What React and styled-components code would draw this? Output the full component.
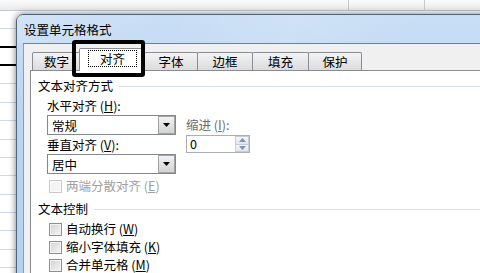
import styled, { createGlobalStyle } from "styled-components";

const GlobalStyle = createGlobalStyle`
  html, body {
    margin: 0;
    padding: 0;
  }
  body {
    font-family: "Noto Sans CJK SC", "Liberation Sans", sans-serif;
    font-size: 12px;
    color: #000;
  }
`;

const Screen = styled.div`
  position: relative;
  width: 480px;
  height: 273px;
  overflow: hidden;
  background: #fff;
`;

// spreadsheet behind the dialog
const Sheet = styled.div`
  display: flex;
  flex-direction: column;
`;

const ColumnHeader = styled.div`
  height: 11px;
  box-sizing: border-box;
  display: flex;
  border-bottom: 1px solid #c3cad4;
  background: linear-gradient(#fbfbfb, #ebebeb);
`;

const HeaderCell = styled.div`
  width: ${(p) => p.$w}px;
  flex-shrink: 0;
  border-right: 1px solid #c9c9c9;
`;

const SheetRow = styled.div`
  height: 18.36px;
  box-sizing: border-box;
  border-bottom: ${(p) => (p.$bold ? "2px solid #000" : "1px solid #d0d7e5")};
`;

// dialog window
const Dialog = styled.div`
  position: absolute;
  left: 16px;
  top: 14px;
  width: 500px;
  height: 290px;
  box-sizing: border-box;
  display: flex;
  flex-direction: column;
  border: 1px solid #4f6379;
  border-radius: 7px 7px 0 0;
  background: linear-gradient(180deg, #c9def5 0%, #b8d5f2 40%, #b2d1f1 100%);
  box-shadow: 0 0 7px rgba(0, 0, 0, 0.55);
`;

const TitleBar = styled.div`
  height: 28px;
  display: flex;
  align-items: center;
  padding-left: 7px;
  font-size: 12.5px;
  background: linear-gradient(
    110deg,
    rgba(255, 255, 255, 0.15) 0%,
    rgba(255, 255, 255, 0) 30%,
    rgba(255, 255, 255, 0.12) 55%,
    rgba(255, 255, 255, 0) 80%
  );
`;

const Client = styled.div`
  flex: 1;
  margin-left: 6px;
  padding-left: 6px;
  display: flex;
  flex-direction: column;
  background: #f0f0f0;
  border-left: 1px solid #8c9db1;
  border-top: 1px solid #6f8197;
`;

const TabStrip = styled.div`
  height: 26px;
  display: flex;
  align-items: flex-end;
  padding-left: 2px;
  position: relative;
  z-index: 1;
`;

const Tab = styled.div`
  width: ${(p) => p.$w}px;
  height: ${(p) => (p.$active ? 23 : 18)}px;
  box-sizing: border-box;
  flex-shrink: 0;
  display: flex;
  justify-content: center;
  align-items: ${(p) => (p.$active ? "flex-start" : "center")};
  padding-top: ${(p) => (p.$active ? 1 : 0)}px;
  margin-right: -1px;
  margin-left: ${(p) => (p.$active ? -1 : 0)}px;
  margin-bottom: ${(p) => (p.$active ? -1 : 0)}px;
  border: 1px solid #898c95;
  border-bottom: none;
  border-radius: 2px 2px 0 0;
  background: ${(p) =>
    p.$active ? "#fff" : "linear-gradient(#f4f4f4, #e6e6e6 55%, #dcdcdc)"};
  font-size: 12.5px;
  line-height: 15px;
  position: relative;
  z-index: ${(p) => (p.$active ? 2 : 1)};
`;

const FocusLabel = styled.div`
  width: 49px;
  height: 17px;
  box-sizing: border-box;
  border: 1px dotted #000;
  display: flex;
  align-items: center;
  justify-content: center;
  margin-left: 1px;
`;

const Panel = styled.div`
  flex: 1;
  display: flex;
  flex-direction: column;
  padding-left: 7px;
  background: #fff;
  border: 1px solid #898c95;
`;

const GroupHeader = styled.div`
  margin-top: ${(p) => p.$top}px;
  display: flex;
  align-items: center;
  gap: 6px;
  line-height: 14px;
  font-size: 12.5px;
  &::after {
    content: "";
    flex: 1;
    height: 1px;
    background: #d5dfe5;
  }
`;

const AlignRow = styled.div`
  margin-top: 3px;
  padding-left: 9px;
  display: flex;
`;

const LeftColumn = styled.div`
  width: 129px;
  display: flex;
  flex-direction: column;
`;

const FieldLabel = styled.div`
  line-height: ${(p) => p.$lh || 19}px;
  margin-bottom: ${(p) => p.$gap || 0}px;
  color: ${(p) => p.$color || "#000"};
  font-size: 12.5px;
`;

const Select = styled.div`
  height: 20px;
  box-sizing: border-box;
  display: flex;
  align-items: center;
  padding-left: 4px;
  border: 1px solid #828790;
  background: #fff;
  font-size: 12.5px;
`;

const SelectText = styled.span`
  flex: 1;
`;

const DropButton = styled.div`
  width: 17px;
  height: 18px;
  box-sizing: border-box;
  display: flex;
  align-items: center;
  justify-content: center;
  border: 1px solid #a3a3a3;
  background: linear-gradient(#f3f3f3, #e2e2e2 50%, #d3d3d3);
`;

const IndentColumn = styled.div`
  margin-left: 10px;
  padding-top: 22px;
  display: flex;
  flex-direction: column;
`;

const SpinBox = styled.div`
  width: 64px;
  height: 18px;
  box-sizing: border-box;
  display: flex;
  border: 1px solid #abadb3;
  background: #fff;
`;

const SpinValue = styled.span`
  flex: 1;
  padding-left: 3px;
  line-height: 16px;
  font-size: 12.5px;
`;

const SpinButtons = styled.div`
  width: 14px;
  display: flex;
  flex-direction: column;
`;

const SpinButton = styled.div`
  flex: 1;
  display: flex;
  align-items: center;
  justify-content: center;
  border: 1px solid #c8cdd5;
  background: linear-gradient(#f5f7f9, #e3e7ec);
  & + & {
    border-top: none;
  }
`;

const CheckRow = styled.div`
  margin-top: ${(p) => p.$top}px;
  padding-left: 11px;
  height: 14px;
  display: flex;
  align-items: center;
  gap: 4px;
  color: ${(p) => (p.$disabled ? "#a0a0a0" : "#000")};
  font-size: 12.5px;
`;

const CheckLabel = styled.span`
  line-height: 14px;
`;

const CheckBox = styled.span`
  width: 13px;
  height: 13px;
  box-sizing: border-box;
  flex-shrink: 0;
  border: 1px solid ${(p) => (p.$disabled ? "#c9c9c9" : "#8f8f8f")};
  background: ${(p) =>
    p.$disabled ? "#f4f4f4" : "linear-gradient(135deg, #d2d2d2 0%, #f6f6f6 100%)"};
  box-shadow: inset 0 0 0 1px ${(p) => (p.$disabled ? "#fbfbfb" : "#f3f3f3")};
`;

const Highlight = styled.div`
  position: absolute;
  left: 72px;
  top: 40px;
  width: 73px;
  height: 37px;
  box-sizing: border-box;
  border: 4px solid #000;
  border-radius: 3px;
  z-index: 5;
`;

function Arrow({ up, color = "#000" }) {
  return (
    <svg width="7" height="4" viewBox="0 0 7 4">
      <polygon points={up ? "0,4 7,4 3.5,0" : "0,0 7,0 3.5,4"} fill={color} />
    </svg>
  );
}

const tabs = [
  { label: "数字", w: 49 },
  { label: "对齐", w: 66, active: true },
  { label: "字体", w: 54 },
  { label: "边框", w: 56 },
  { label: "填充", w: 57 },
  { label: "保护", w: 54 },
];

const rows = Array.from({ length: 14 }, (_, i) => i);

export default function App() {
  return (
    <Screen>
      <GlobalStyle />
      <Sheet>
        <ColumnHeader>
          <HeaderCell $w={348} />
          <HeaderCell $w={75} />
        </ColumnHeader>
        {rows.map((i) => (
          <SheetRow key={i} $bold={i === 1 || i === 2} />
        ))}
      </Sheet>

      <Dialog>
        <TitleBar>设置单元格格式</TitleBar>
        <Client>
          <TabStrip>
            {tabs.map((t) => (
              <Tab key={t.label} $w={t.w} $active={t.active}>
                {t.active ? <FocusLabel>{t.label}</FocusLabel> : t.label}
              </Tab>
            ))}
          </TabStrip>
          <Panel>
            <GroupHeader $top={8}>文本对齐方式</GroupHeader>
            <AlignRow>
              <LeftColumn>
                <FieldLabel>
                  水平对齐 (<u>H</u>):
                </FieldLabel>
                <Select>
                  <SelectText>常规</SelectText>
                  <DropButton>
                    <Arrow />
                  </DropButton>
                </Select>
                <FieldLabel>
                  垂直对齐 (<u>V</u>):
                </FieldLabel>
                <Select>
                  <SelectText>居中</SelectText>
                  <DropButton>
                    <Arrow />
                  </DropButton>
                </Select>
              </LeftColumn>
              <IndentColumn>
                <FieldLabel $lh={14} $gap={3} $color="#6d6d6d">
                  缩进 (<u>I</u>):
                </FieldLabel>
                <SpinBox>
                  <SpinValue>0</SpinValue>
                  <SpinButtons>
                    <SpinButton>
                      <Arrow up color="#7f93b4" />
                    </SpinButton>
                    <SpinButton>
                      <Arrow color="#7f93b4" />
                    </SpinButton>
                  </SpinButtons>
                </SpinBox>
              </IndentColumn>
            </AlignRow>
            <CheckRow $top={5} $disabled>
              <CheckBox $disabled />
              <CheckLabel>
                两端分散对齐 (<u>E</u>)
              </CheckLabel>
            </CheckRow>

            <GroupHeader $top={9}>文本控制</GroupHeader>
            <CheckRow $top={6}>
              <CheckBox />
              <CheckLabel>
                自动换行 (<u>W</u>)
              </CheckLabel>
            </CheckRow>
            <CheckRow $top={4}>
              <CheckBox />
              <CheckLabel>
                缩小字体填充 (<u>K</u>)
              </CheckLabel>
            </CheckRow>
            <CheckRow $top={4}>
              <CheckBox />
              <CheckLabel>
                合并单元格 (<u>M</u>)
              </CheckLabel>
            </CheckRow>
          </Panel>
        </Client>
      </Dialog>

      <Highlight />
    </Screen>
  );
}
